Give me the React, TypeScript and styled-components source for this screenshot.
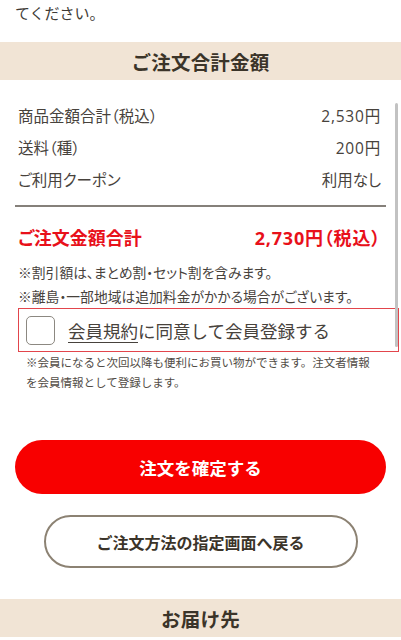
import React from "react";
import styled, { createGlobalStyle } from "styled-components";

const GlobalStyle = createGlobalStyle`
  html, body {
    margin: 0;
    padding: 0;
    background: #ffffff;
  }
  body {
    font-family: "Noto Sans CJK JP", "Noto Sans", sans-serif;
    color: #3e3a35;
    -webkit-font-smoothing: antialiased;
  }
  * { box-sizing: border-box; }
`;

const Page = styled.div`
  position: relative;
  width: 401px;
  height: 640px;
  overflow: hidden;
  display: flex;
  flex-direction: column;
`;

const Lead = styled.p`
  margin: 0 0 16px;
  padding: 0 15px;
  font-size: 15px;
  line-height: 26px;
  color: #3e3a35;
`;

const Band = styled.h2<{ $mt?: number }>`
  margin: ${(p) => p.$mt ?? 0}px 0 0;
  height: 38px;
  flex-shrink: 0;
  display: flex;
  align-items: center;
  justify-content: center;
  background: #f1e4d5;
  font-size: 19.5px;
  font-weight: 700;
  color: #3b3429;
  letter-spacing: 0.2px;
`;

const Rows = styled.div`
  margin-top: 19px;
  padding: 0 20px 0 18px;
  display: flex;
  flex-direction: column;
  font-feature-settings: "palt";
`;

const Row = styled.div`
  display: flex;
  justify-content: space-between;
  align-items: center;
  height: 32px;
  font-size: 15.5px;
  color: #47423c;
`;

const Num = styled.span`
  font-family: "Open Sans", "Noto Sans CJK JP", sans-serif;
  letter-spacing: 0.8px;
`;

const Divider = styled.hr`
  margin: 10px 15px 0;
  border: none;
  height: 2px;
  background: #85807a;
`;

const TotalRow = styled.div`
  margin-top: 15px;
  padding: 0 20px 0 18px;
  height: 30px;
  display: flex;
  justify-content: space-between;
  align-items: center;
  color: #e8101a;
  font-weight: 700;
  font-size: 18px;
  font-feature-settings: "palt";
`;

const Notes = styled.div`
  margin-top: 8px;
  padding: 0 18px;
  display: flex;
  flex-direction: column;
  font-feature-settings: "palt";
`;

const Note = styled.p`
  margin: 0;
  font-size: 13.8px;
  line-height: 24px;
  color: #47423c;
  white-space: nowrap;
`;

const AgreeBox = styled.label`
  margin: 0 2px 0 18px;
  height: 44px;
  display: flex;
  align-items: center;
  gap: 13px;
  padding-left: 7px;
  border: 1.5px solid #e2454c;
`;

const CheckSquare = styled.span`
  width: 29px;
  height: 29px;
  flex-shrink: 0;
  border: 1.5px solid #8c8881;
  border-radius: 5px;
  background: #fff;
`;

const AgreeText = styled.span`
  font-size: 17.5px;
  color: #47423c;
  white-space: nowrap;
`;

const TermsLink = styled.span`
  text-decoration: underline;
  text-underline-offset: 4px;
  text-decoration-thickness: 1px;
`;

const SmallNote = styled.p`
  margin: 0;
  padding: 0 20px 0 26px;
  font-size: 11.5px;
  line-height: 20px;
  color: #514c46;
`;

const PrimaryButton = styled.button`
  margin: 48px 15px 0;
  height: 54px;
  border: none;
  border-radius: 27px;
  background: #f80000;
  color: #ffffff;
  font-family: inherit;
  font-size: 17.5px;
  font-weight: 700;
  display: flex;
  align-items: center;
  justify-content: center;
`;

const SecondaryButton = styled.button`
  margin: 21px auto 0;
  width: 314px;
  height: 53px;
  border: 2px solid #8c8273;
  border-radius: 27px;
  background: #ffffff;
  color: #3b3429;
  font-family: inherit;
  font-size: 16px;
  font-weight: 700;
  display: flex;
  align-items: center;
  justify-content: center;
`;

const ScrollThumb = styled.div`
  position: absolute;
  top: 103px;
  left: 395px;
  width: 3px;
  height: 244px;
  border-radius: 2px;
  background: #c2c2c2;
`;

const rows = [
  { label: "商品金額合計（税込）", value: "2,530円", numeric: true },
  { label: "送料（種）", value: "200円", numeric: true },
  { label: "ご利用クーポン", value: "利用なし", numeric: false },
];

export default function App() {
  return (
    <>
      <GlobalStyle />
      <Page>
        <Lead>てください。</Lead>
        <Band>ご注文合計金額</Band>
        <Rows>
          {rows.map((r) => (
            <Row key={r.label}>
              <span>{r.label}</span>
              {r.numeric ? <Num>{r.value}</Num> : <span>{r.value}</span>}
            </Row>
          ))}
        </Rows>
        <Divider />
        <TotalRow>
          <span>ご注文金額合計</span>
          <Num>2,730円（税込）</Num>
        </TotalRow>
        <Notes>
          <Note>※割引額は、まとめ割・セット割を含みます。</Note>
          <Note>※離島・一部地域は追加料金がかかる場合がございます。</Note>
        </Notes>
        <AgreeBox>
          <CheckSquare />
          <AgreeText>
            <TermsLink>会員規約</TermsLink>に同意して会員登録する
          </AgreeText>
        </AgreeBox>
        <SmallNote>
          ※会員になると次回以降も便利にお買い物ができます。注文者情報を会員情報として登録します。
        </SmallNote>
        <PrimaryButton>注文を確定する</PrimaryButton>
        <SecondaryButton>ご注文方法の指定画面へ戻る</SecondaryButton>
        <Band $mt={31}>お届け先</Band>
        <ScrollThumb />
      </Page>
    </>
  );
}
